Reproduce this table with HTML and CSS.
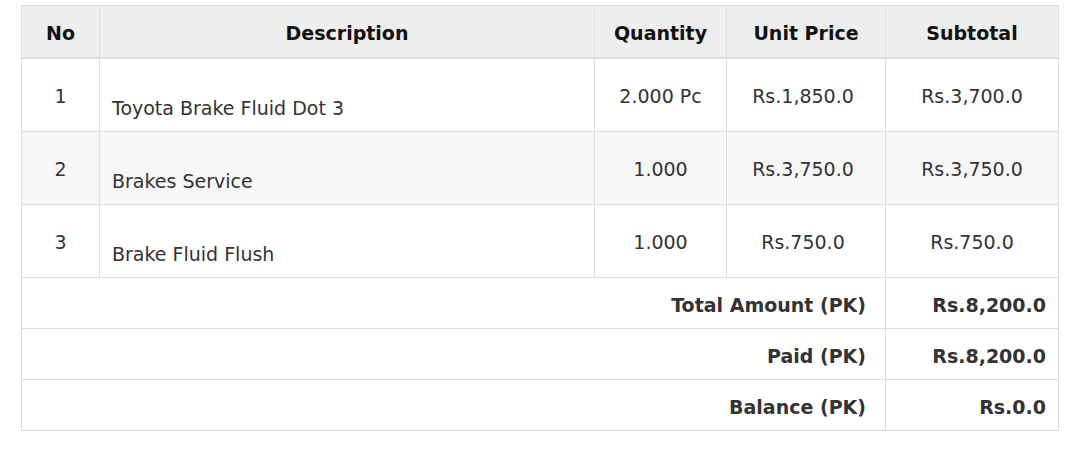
FILE: index.html
```html
<!DOCTYPE html>
<html>
<head>
<meta charset="utf-8">
<link rel="stylesheet" href="styles.css">
</head>
<body>
<div class="wrap">
  <table class="lines">
    <colgroup>
      <col class="c-no">
      <col class="c-desc">
      <col class="c-qty">
      <col class="c-unit">
      <col class="c-sub">
    </colgroup>
    <thead>
      <tr>
        <th>No</th>
        <th>Description</th>
        <th>Quantity</th>
        <th>Unit Price</th>
        <th>Subtotal</th>
      </tr>
    </thead>
    <tbody>
      <tr>
        <td class="center">1</td>
        <td class="desc"><div class="code">&nbsp;</div><div>Toyota Brake Fluid Dot 3</div></td>
        <td class="center">2.000 Pc</td>
        <td class="center unit">Rs.1,850.0</td>
        <td class="center">Rs.3,700.0</td>
      </tr>
      <tr class="alt">
        <td class="center">2</td>
        <td class="desc"><div class="code">&nbsp;</div><div>Brakes Service</div></td>
        <td class="center">1.000</td>
        <td class="center unit">Rs.3,750.0</td>
        <td class="center">Rs.3,750.0</td>
      </tr>
      <tr>
        <td class="center">3</td>
        <td class="desc"><div class="code">&nbsp;</div><div>Brake Fluid Flush</div></td>
        <td class="center">1.000</td>
        <td class="center unit">Rs.750.0</td>
        <td class="center">Rs.750.0</td>
      </tr>
      <tr class="sum">
        <td colspan="4" class="label">Total Amount (PK)</td>
        <td class="value">Rs.8,200.0</td>
      </tr>
      <tr class="sum">
        <td colspan="4" class="label">Paid (PK)</td>
        <td class="value">Rs.8,200.0</td>
      </tr>
      <tr class="sum">
        <td colspan="4" class="label">Balance (PK)</td>
        <td class="value">Rs.0.0</td>
      </tr>
    </tbody>
  </table>
</div>
</body>
</html>
```

FILE: styles.css
```css
html, body {
  margin: 0;
  padding: 0;
  background: #ffffff;
}

body {
  font-family: "DejaVu Sans", "Liberation Sans", sans-serif;
  font-size: 19px;
  line-height: 27px;
  color: #333333;
}

.wrap {
  padding: 5px 21px 0 21px;
}

.lines {
  width: 100%;
  border-collapse: collapse;
  table-layout: fixed;
}

.c-no { width: 78px; }
.c-desc { width: 495px; }
.c-qty { width: 132px; }
.c-unit { width: 159px; }
.c-sub { width: 173px; }

.lines th,
.lines td {
  border: 1px solid #dddddd;
  padding: 10px 12px 8px;
  vertical-align: middle;
}

.lines th {
  background: #eeeeee;
  color: #111111;
  font-weight: bold;
  text-align: center;
  padding-top: 14px;
  padding-bottom: 10px;
  border-bottom: 2px solid #dddddd;
}

.lines td.center {
  text-align: center;
}

.lines td.unit {
  padding-right: 18px;
}

.lines td.desc {
  text-align: left;
  padding-top: 9px;
  padding-bottom: 9px;
}

.lines tr.alt td {
  background: #f7f7f7;
}

.lines tr.sum td {
  font-weight: bold;
  text-align: right;
  padding-top: 14px;
  padding-bottom: 9px;
}

.lines tr.sum td.label {
  padding-right: 19px;
}
```
